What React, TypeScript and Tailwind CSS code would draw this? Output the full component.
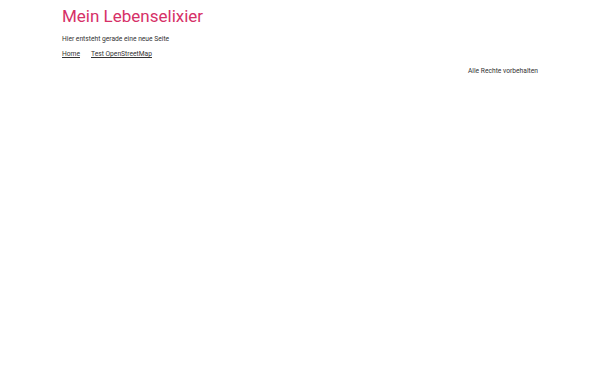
export default function App() {
  return (
    <div className="min-h-[375px] bg-white" style={{ fontFamily: "Roboto, sans-serif" }}>
      <div className="mx-auto w-[476px]">
        <header className="pt-[5px]">
          <h1 className="text-[17px] leading-[22px] font-normal text-[#d63067]">Mein Lebenselixier</h1>
          <p className="mt-[7px] text-[6.7px] leading-[10px] text-[#333]">Hier entsteht gerade eine neue Seite</p>
          <nav className="mt-[5px] flex gap-[11px] text-[6.7px] leading-[10px] text-[#333]">
            <a className="underline" href="#">Home</a>
            <a className="underline" href="#">Test OpenStreetMap</a>
          </nav>
        </header>
        <footer className="mt-[7px] text-right text-[6.7px] leading-[10px] text-[#333]">Alle Rechte vorbehalten</footer>
      </div>
    </div>
  );
}
